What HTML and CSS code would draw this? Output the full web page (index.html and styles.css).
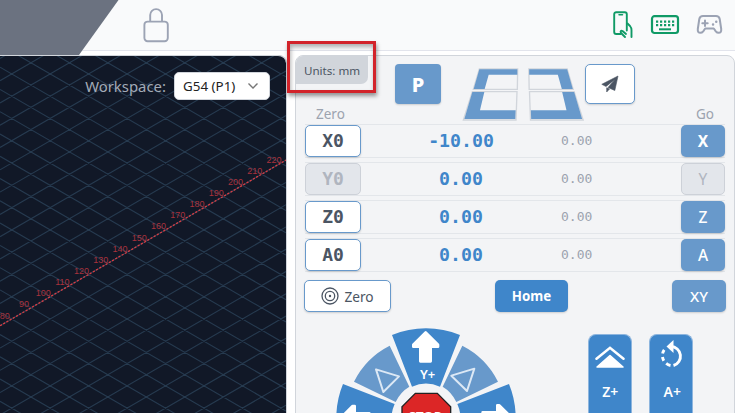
FILE: index.html
```html
<!DOCTYPE html>
<html lang="en">
<head>
<meta charset="utf-8">
<title>CNC Control</title>
<link rel="stylesheet" href="styles.css">
</head>
<body>
<header class="topbar">
  <svg class="corner" width="120" height="55" viewBox="0 0 120 55"><path d="M0 0H118.5L79 55H0Z" fill="#6b7280"/></svg>
  <svg class="lock" width="28" height="36" viewBox="0 0 28 36" fill="none" stroke="#9ca3b4" stroke-width="1.9"><rect x="2.4" y="14.6" width="23.4" height="19.6" rx="3.2"/><path d="M8.2 14.4V8a5.9 5.9 0 0 1 11.8 0v6.4"/></svg>
  <div class="status">
    <svg width="22" height="30" viewBox="0 0 22 30" fill="none" stroke="#109a66" stroke-width="1.9" stroke-linecap="round" stroke-linejoin="round"><path d="M8.500 24H4.200a2 2 0 0 1-2-2V4.200a2 2 0 0 1 2-2H12.800a2 2 0 0 1 2 2V20.500"/><path d="M7 4.700H10.500" stroke-width="1.500"/><path d="M15.500 13.500L18 16C19.300 17.500 19.500 18.500 19.500 20V27M14 24L10.500 21C9 20.300 8 21.500 9 23L13 27"/></svg>
    <svg width="30" height="22" viewBox="0 0 30 22" fill="none" stroke="#109a66"><rect x="2" y="2.200" width="26" height="16.800" rx="2.500" stroke-width="2.200"/><path d="M6 7.700H24.500M6 11.200H24.500" stroke-width="2.200" stroke-dasharray="2.200 1.800"/><path d="M9 15.300H21" stroke-width="2"/></svg>
    <svg width="28" height="22" viewBox="0 0 28 22" fill="none" stroke="#9ca3b4" stroke-width="2" stroke-linejoin="round" stroke-linecap="round"><path d="M7 2H20Q23 2 23.700 5L25.200 15Q25.600 18.800 22.600 18.800Q21 18.800 19.800 17.300L17.800 14.500H9.200L7.200 17.300Q6 18.800 4.400 18.800Q1.400 18.800 1.800 15L3.300 5Q4 2 7 2Z"/><path d="M9 6.500V11.900M6.300 9.200H11.700"/><path d="M17 10.500h.1M20.200 7.800h.1" stroke-width="2.400"/></svg>
  </div>
</header>

<main class="work">
  <section class="view">
    <svg class="plot" id="plot" width="286" height="357" viewBox="0 56 286 357"></svg>
    <div class="workspace"><span>Workspace:</span>
      <div class="select">G54 (P1)<svg width="12" height="8" viewBox="0 0 12 8" fill="none" stroke="#777" stroke-width="1.400"><path d="M1.500 1.500L6 6L10.500 1.500"/></svg></div>
    </div>
  </section>

  <section class="panel">
    <div class="tools">
      <div class="units">Units: mm</div>
      <button class="btn soft park">P</button>
      <svg class="corners" width="122.67" height="54" viewBox="36 54 368 162">
        <g id="half">
          <path d="M88 57H203L202 118H70ZM67 125H201L198 210H40Z" fill="#f3f4f6" stroke="#d1d5db" stroke-width="4"/>
          <path d="M88 58H202V74H116L104 117H71ZM67 126H103L90 181H197L196 207H43Z" fill="#6899cb"/>
        </g>
        <use href="#half" transform="translate(439.500 0) scale(-1 1)"/>
      </svg>
      <button class="btn outline send"><svg width="18" height="18" viewBox="0 0 18 18"><path d="M17 1L.8 9.300L5 11.500L14 4.500L7 12.500L13.800 15.500ZM5.700 12.800V17L8.500 14Z" fill="#4b5563" stroke="#4b5563" stroke-width=".6" stroke-linejoin="round"/></svg></button>
    </div>
    <div class="heads"><span>Zero</span><span>Go</span></div>
    <div class="axes">
      <div class="axis"><button class="btn outline zero">X0</button><b class="pos">-10.00</b><span class="machine">0.00</span><button class="btn soft go strong">X</button></div>
      <div class="axis"><button class="btn off zero">Y0</button><b class="pos">0.00</b><span class="machine">0.00</span><button class="btn off go">Y</button></div>
      <div class="axis"><button class="btn outline zero">Z0</button><b class="pos">0.00</b><span class="machine">0.00</span><button class="btn soft go">Z</button></div>
      <div class="axis"><button class="btn outline zero">A0</button><b class="pos">0.00</b><span class="machine">0.00</span><button class="btn soft go">A</button></div>
    </div>
    <div class="actions">
      <button class="btn outline zero-all"><svg width="18" height="18" viewBox="0 0 18 18" fill="none" stroke="#4b5563" stroke-width="1.300"><circle cx="9" cy="9" r="8"/><circle cx="9" cy="9" r="4.700"/><circle cx="9" cy="9" r="1.200" fill="#4b5563" stroke="none"/></svg>Zero</button>
      <button class="btn solid home">Home</button>
      <button class="btn soft xy">XY</button>
    </div>
    <div class="jog">
      <svg class="wheel" width="183.330" height="88" viewBox="120 180 550 264">
        <g fill="#3f86ca">
          <path id="wedge" d="M291 210A269 269 0 0 1 495 210L435 365A103 103 0 0 0 351 365Z"/>
          <use href="#wedge" transform="rotate(-90 393 459)"/>
          <use href="#wedge" transform="rotate(90 393 459)"/>
        </g>
        <path d="M284 242A242 242 0 0 0 177 350L302 411A103 103 0 0 1 343 365ZM502 242A242 242 0 0 1 609 350L484 411A103 103 0 0 0 443 365Z" fill="#6899cb"/>
        <path d="M243 313L312 334L265 381ZM538 311L469 332L516 378Z" fill="none" stroke="#dce8f5" stroke-width="6" stroke-linejoin="round"/>
        <g fill="#fff" stroke="#fff" stroke-width="8" stroke-linejoin="round">
          <path id="arrow" d="M392 202L429 239V245H407V289H376V245H355V239Z"/>
          <use href="#arrow" transform="rotate(-90 393 459)"/>
          <use href="#arrow" transform="rotate(90 393 459)"/>
        </g>
        <text x="398" y="343" class="jog-label">Y+</text>
        <path d="M361 385H427L467 425V493L427 533H361L321 493V425Z" fill="#dc2626" stroke="#222" stroke-width="4"/>
        <text x="391" y="467" class="stop">STOP</text>
      </svg>
      <button class="lift"><svg width="30" height="24" viewBox="0 0 30 24" fill="#fff"><path d="M1.500 13.800L15 2.800L28.500 13.800" fill="none" stroke="#fff" stroke-width="2.500" stroke-linecap="round"/><path d="M2 22L15 10.500L28 22Z" stroke="#fff" stroke-width="1.500" stroke-linejoin="round"/></svg><span>Z+</span></button>
      <button class="lift turn"><svg width="26" height="30" viewBox="0 0 26 30" fill="none" stroke="#fff" stroke-width="2.900"><path d="M12 7.500A9.700 9.700 0 0 1 14.500 26.500"/><path d="M11.500 26.500A9.700 9.700 0 0 1 7.200 24.400M4.800 21.700A9.700 9.700 0 0 1 3.500 18M3.600 14.500A9.700 9.700 0 0 1 5.200 10.900"/><path d="M14.500 1V14L7.500 7.500Z" fill="#fff" stroke="none"/></svg><span>A+</span></button>
    </div>
  </section>
</main>
<div class="callout"></div>
<script src="plot.js"></script>
</body>
</html>
```
FILE: styles.css
```css
* { box-sizing: border-box; }
body { margin: 0; width: 735px; height: 413px; overflow: hidden; background: #fff; font-family: "Noto Sans", "Open Sans", sans-serif; color: #4b5563; }
button { font: inherit; padding: 0; margin: 0; }
svg { display: block; flex: none; }

.topbar { position: relative; display: flex; justify-content: space-between; height: 51px; padding: 7px 11px 0 142px; background: #f9fafb; border-bottom: 1px solid #e2e4ec; }
.corner { position: absolute; left: 0; top: 0; z-index: 1; }
.status { display: flex; align-items: flex-start; gap: 16px; padding: 7px 0 0; }
.status svg:first-child { margin-top: -4px; }

.work { display: flex; gap: 9px; height: 362px; padding-top: 4px; }
.view { position: relative; width: 286px; height: 358px; border-top: 1px solid #d1d5db; border-top-right-radius: 8px; background: #111827; overflow: hidden; box-shadow: 1px 0 0 #d1d5db; }
.plot { position: absolute; left: 0; top: 0; }
.workspace { position: relative; display: flex; align-items: center; justify-content: flex-end; gap: 8px; margin: 16px 16px 0 0; font-size: 14.9px; color: #a3abb7; }
.select { display: flex; align-items: center; justify-content: space-between; width: 96px; height: 28px; padding: 0 10px 0 8px; border: 1px solid #d1d5db; border-radius: 5px; background: #fff; color: #222; font-size: 13.4px; }

.panel { flex: none; width: 440px; height: 370px; border: 1px solid #d1d5db; border-radius: 8px; background: #f3f4f6; }
.tools { display: flex; align-items: flex-start; height: 48px; }
.units { width: 72px; height: 28px; line-height: 29px; text-align: center; font-size: 11.6px; background: #d1d5db; border-radius: 7px 0 7px 0; }
.btn { display: flex; align-items: center; justify-content: center; border: 0; border-radius: 5px; box-shadow: 0 1px 2px rgba(0, 0, 0, .16); font-size: 15px; }
.soft { background: #6899cb; color: #fff; font-weight: 500; }
.solid { background: #3f86ca; color: #fff; font-weight: 700; }
.outline { background: #fff; border: 1px solid #6899cb; color: #4b5563; }
.off { background: #e3e6eb; border: 1px solid #cdd1d8; color: #b0b5bf; box-shadow: none; }
.park { width: 46px; height: 40px; margin: 8px 0 0 27px; border-radius: 4px; font-size: 20px; font-weight: 800; }
.corners { margin: 12px 0 0 21px; }
.send { width: 50px; height: 40px; margin-top: 8px; }
.heads { display: flex; justify-content: space-between; height: 20px; padding: 0 20px 0 20px; line-height: 20px; font-size: 13.5px; color: #9ca3af; }
.axes { display: flex; flex-direction: column; gap: 4px; margin: 0 9px 0 9px; }
.axis { display: grid; grid-template-columns: 56px 200px 31px 1fr; align-items: center; height: 34px; border: solid #e3e6ea; border-width: 1px 0; font-family: "DejaVu Sans Mono", monospace; }
.zero { height: 32px; padding-bottom: 2px; font-family: "DejaVu Sans Mono", monospace; font-size: 18px; font-weight: 700; }
.pos { padding-bottom: 2px; text-align: center; font-size: 18.2px; color: #3f86ca; }
.machine { padding-bottom: 2px; font-size: 13px; color: #9ca3af; }
.go { justify-self: end; width: 44px; height: 32px; font-family: "Noto Sans", sans-serif; font-size: 15.5px; }
.strong { font-weight: 700; }
.actions { display: flex; justify-content: space-between; margin: 8px 8px 0; }
.actions .btn { height: 32px; }
.zero-all { width: 87px; gap: 5px; font-size: 13.7px; }
.home { width: 73px; font-size: 13.3px; }
.xy { width: 54px; }
.jog { display: flex; align-items: flex-start; padding-left: 39px; }
.wheel { margin-top: 13px; }
.jog-label, .stop { font-family: "Noto Sans", sans-serif; text-anchor: middle; fill: #fff; font-weight: 600; font-size: 39px; }
.stop { font-size: 40px; }
.lift { display: flex; flex-direction: column; align-items: center; width: 44px; height: 90px; margin: 22px 0 0 70px; padding-top: 10px; border: 1px solid #8db5de; border-bottom: 0; border-radius: 8px 8px 0 0; background: #3f86ca; color: #fff; font-size: 14px; font-weight: 600; line-height: 20px; }
.lift span { margin-top: 13px; }
.turn { margin-left: 17px; padding: 4px 0 0 2px; }
.callout { position: absolute; left: 287px; top: 41px; width: 89px; height: 52px; border: 3px solid #d2232a; box-shadow: 1px 3px 4px rgba(0, 0, 0, .4), inset 1px 3px 4px rgba(0, 0, 0, .3); }
```
FILE: plot.js
```js
const plot = document.getElementById('plot');
const origin = { x: 11.7, y: 319 };
const step = { x: 19.23, y: 11.14 };
const slope = step.y / step.x;
let grid = '';
for (let k = -30; k <= 30; k++) {
  const y = origin.y + k * step.y * 2;
  const left = origin.x * slope;
  const run = 286 * slope;
  grid += `M0 ${y + left}L286 ${y + left - run}M0 ${y - left}L286 ${y - left + run}`;
}
const axisStart = origin.y + origin.x * slope;
let labels = '';
for (let i = 0; i <= 14; i++) {
  labels += `<text x="${origin.x - 7 + i * step.x}" y="${origin.y - 0.5 - i * step.y}">${80 + i * 10}</text>`;
}
plot.innerHTML = `<path d="${grid}" stroke="#263a4f" stroke-width="1.15" fill="none"/>
<path d="M0 ${axisStart}L286 ${axisStart - 286 * slope}" stroke="#d93c42" stroke-width="1.3" stroke-dasharray="2.2 1.5"/>
<g fill="#a8323c" font-family="Liberation Sans" font-size="9" text-anchor="middle">${labels}</g>`;
```
